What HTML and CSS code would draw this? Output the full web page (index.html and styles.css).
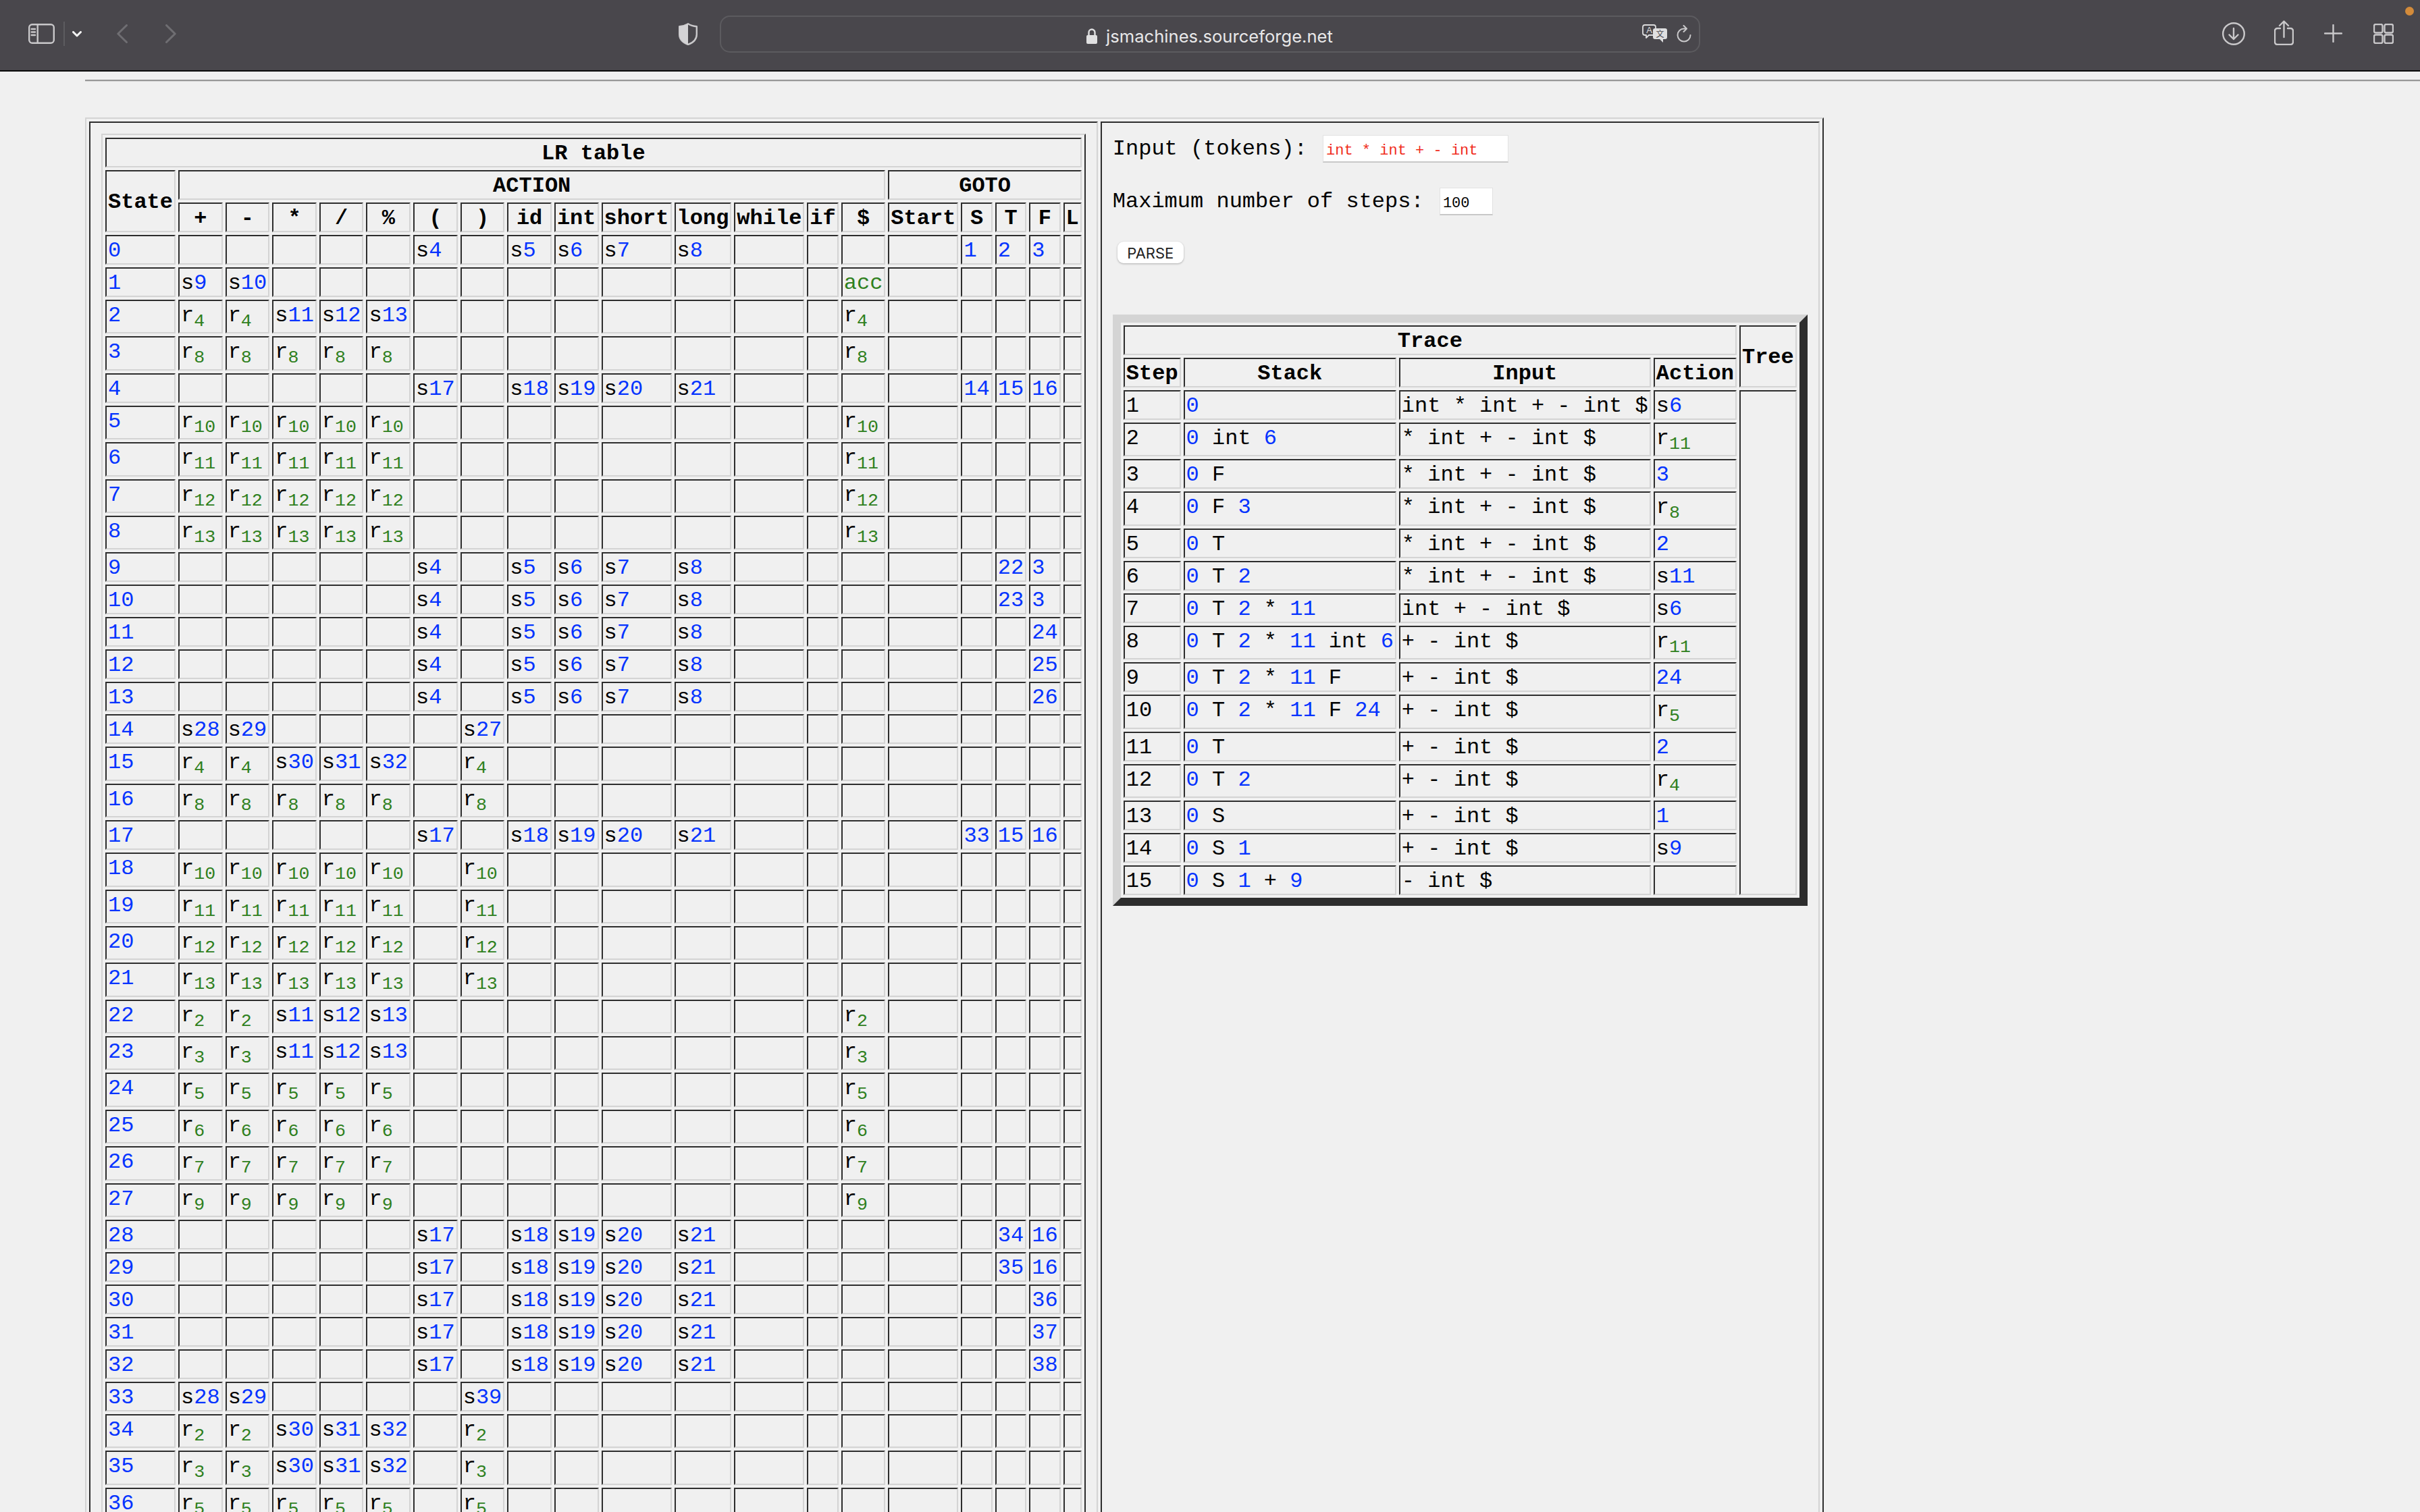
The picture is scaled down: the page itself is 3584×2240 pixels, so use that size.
FILE: index.html
```html
<!DOCTYPE html>
<html lang="en">
<head>
<meta charset="utf-8">
<title>jsmachines.sourceforge.net</title>
<link rel="stylesheet" href="styles.css">
</head>
<body>
<header class="toolbar">
<svg class="ic m-sidebar" width="39" height="30" viewBox="0 0 39 30"><rect x="1.2" y="1.2" width="36.6" height="27.6" rx="4.5"/><path d="M13.7 1.2V28.8M4.7 8H10M4.7 12.5H10M4.7 17H10"/></svg>
<span class="tb-divider"></span>
<svg class="ic-white m-chevron" width="14" height="9" viewBox="0 0 14 9"><path d="M1.5 1.5L7 7L12.5 1.5"/></svg>
<svg class="ic-dim m-back" width="16" height="28" viewBox="0 0 16 28"><path d="M14.5 1.5L1.8 14L14.5 26.5"/></svg>
<svg class="ic-dim m-fwd" width="16" height="28" viewBox="0 0 16 28"><path d="M1.5 1.5L14.2 14L1.5 26.5"/></svg>
<svg class="ic m-shield" width="28" height="33" viewBox="0 0 28 33"><path d="M14 1.2C10.500 3.500 5.500 4.800 1.200 5.200V17C1.200 25 8 29.800 14 32C20 29.800 26.800 25 26.800 17V5.200C22.500 4.800 17.500 3.500 14 1.200Z"/><path class="fill" d="M14 1.200C10.500 3.500 5.500 4.800 1.200 5.200V17C1.200 25 8 29.800 14 32Z"/></svg>
<div class="urlbar m-url">
  <span class="url-side"></span>
  <span class="url-center">
    <svg class="lock" width="16" height="23" viewBox="0 0 16 23"><path class="shackle" d="M3.500 11V6a4.500 4.500 0 0 1 9 0V11"/><rect class="body" x="0" y="10" width="16" height="13" rx="2"/></svg>
    <span class="url-text">jsmachines.sourceforge.net</span>
  </span>
  <span class="url-side url-right">
    <svg class="translate" width="38" height="28" viewBox="0 0 38 28"><path class="bubble" d="M4 1H17Q20 1 20 4V13Q20 16 17 16H10L6 20V16H4Q1 16 1 13V4Q1 1 4 1Z"/><text class="ta" x="10.500" y="13">A</text><path class="bubble2" d="M19 6H34Q37 6 37 9V19Q37 22 34 22H31V27L26 22H19Q16 22 16 19V9Q16 6 19 6Z"/><text class="tz" x="26.500" y="19">文</text></svg>
    <svg class="ic reload" width="22" height="26" viewBox="0 0 22 26"><path d="M14.500 5.500H11A9.500 9.500 0 1 0 20.500 15M10.500 1L15 5.500L10.500 10"/></svg>
  </span>
</div>
<svg class="ic m-down" width="34" height="34" viewBox="0 0 34 34"><circle cx="17" cy="17" r="15.800"/><path d="M17 9V25M10.500 18.500L17 25L23.500 18.500"/></svg>
<svg class="ic m-share" width="29" height="37" viewBox="0 0 29 37"><path d="M9 12H5Q1 12 1 16V32Q1 36 5 36H24Q28 36 28 32V16Q28 12 24 12H20M14.500 2V25M8 8L14.500 1.500L21 8"/></svg>
<svg class="ic m-plus" width="27" height="27" viewBox="0 0 27 27"><path d="M13.500 1V26M1 13.500H26"/></svg>
<svg class="ic m-tabs" width="30" height="30" viewBox="0 0 30 30"><rect x="1" y="1" width="12.500" height="12.500" rx="2.500"/><rect x="16.500" y="1" width="12.500" height="12.500" rx="2.500"/><rect x="1" y="16.500" width="12.500" height="12.500" rx="2.500"/><rect x="16.500" y="16.500" width="12.500" height="12.500" rx="2.500"/></svg>
<span class="rec-dot"></span>
</header>
<main class="page">
<hr class="rule">
<table class="layout">
<tr>
<td class="pane">
<table class="grid">
<tr><th colspan="20">LR table</th></tr>
<tr><th rowspan="2">State</th><th colspan="14">ACTION</th><th colspan="5">GOTO</th></tr>
<tr><th>+</th><th>-</th><th>*</th><th>/</th><th>%</th><th>(</th><th>)</th><th>id</th><th>int</th><th>short</th><th>long</th><th>while</th><th>if</th><th>$</th><th>Start</th><th>S</th><th>T</th><th>F</th><th>L</th></tr>
<tr><td><a>0</a><td><td><td><td><td><td>s<a>4</a><td><td>s<a>5</a><td>s<a>6</a><td>s<a>7</a><td>s<a>8</a><td><td><td><td><td><a>1</a><td><a>2</a><td><a>3</a><td></tr>
<tr><td><a>1</a><td>s<a>9</a><td>s<a>10</a><td><td><td><td><td><td><td><td><td><td><td><td><em>acc</em><td><td><td><td><td></tr>
<tr><td><a>2</a><td>r<sub>4</sub><td>r<sub>4</sub><td>s<a>11</a><td>s<a>12</a><td>s<a>13</a><td><td><td><td><td><td><td><td><td>r<sub>4</sub><td><td><td><td><td></tr>
<tr><td><a>3</a><td>r<sub>8</sub><td>r<sub>8</sub><td>r<sub>8</sub><td>r<sub>8</sub><td>r<sub>8</sub><td><td><td><td><td><td><td><td><td>r<sub>8</sub><td><td><td><td><td></tr>
<tr><td><a>4</a><td><td><td><td><td><td>s<a>17</a><td><td>s<a>18</a><td>s<a>19</a><td>s<a>20</a><td>s<a>21</a><td><td><td><td><td><a>14</a><td><a>15</a><td><a>16</a><td></tr>
<tr><td><a>5</a><td>r<sub>10</sub><td>r<sub>10</sub><td>r<sub>10</sub><td>r<sub>10</sub><td>r<sub>10</sub><td><td><td><td><td><td><td><td><td>r<sub>10</sub><td><td><td><td><td></tr>
<tr><td><a>6</a><td>r<sub>11</sub><td>r<sub>11</sub><td>r<sub>11</sub><td>r<sub>11</sub><td>r<sub>11</sub><td><td><td><td><td><td><td><td><td>r<sub>11</sub><td><td><td><td><td></tr>
<tr><td><a>7</a><td>r<sub>12</sub><td>r<sub>12</sub><td>r<sub>12</sub><td>r<sub>12</sub><td>r<sub>12</sub><td><td><td><td><td><td><td><td><td>r<sub>12</sub><td><td><td><td><td></tr>
<tr><td><a>8</a><td>r<sub>13</sub><td>r<sub>13</sub><td>r<sub>13</sub><td>r<sub>13</sub><td>r<sub>13</sub><td><td><td><td><td><td><td><td><td>r<sub>13</sub><td><td><td><td><td></tr>
<tr><td><a>9</a><td><td><td><td><td><td>s<a>4</a><td><td>s<a>5</a><td>s<a>6</a><td>s<a>7</a><td>s<a>8</a><td><td><td><td><td><td><a>22</a><td><a>3</a><td></tr>
<tr><td><a>10</a><td><td><td><td><td><td>s<a>4</a><td><td>s<a>5</a><td>s<a>6</a><td>s<a>7</a><td>s<a>8</a><td><td><td><td><td><td><a>23</a><td><a>3</a><td></tr>
<tr><td><a>11</a><td><td><td><td><td><td>s<a>4</a><td><td>s<a>5</a><td>s<a>6</a><td>s<a>7</a><td>s<a>8</a><td><td><td><td><td><td><td><a>24</a><td></tr>
<tr><td><a>12</a><td><td><td><td><td><td>s<a>4</a><td><td>s<a>5</a><td>s<a>6</a><td>s<a>7</a><td>s<a>8</a><td><td><td><td><td><td><td><a>25</a><td></tr>
<tr><td><a>13</a><td><td><td><td><td><td>s<a>4</a><td><td>s<a>5</a><td>s<a>6</a><td>s<a>7</a><td>s<a>8</a><td><td><td><td><td><td><td><a>26</a><td></tr>
<tr><td><a>14</a><td>s<a>28</a><td>s<a>29</a><td><td><td><td><td>s<a>27</a><td><td><td><td><td><td><td><td><td><td><td><td></tr>
<tr><td><a>15</a><td>r<sub>4</sub><td>r<sub>4</sub><td>s<a>30</a><td>s<a>31</a><td>s<a>32</a><td><td>r<sub>4</sub><td><td><td><td><td><td><td><td><td><td><td><td></tr>
<tr><td><a>16</a><td>r<sub>8</sub><td>r<sub>8</sub><td>r<sub>8</sub><td>r<sub>8</sub><td>r<sub>8</sub><td><td>r<sub>8</sub><td><td><td><td><td><td><td><td><td><td><td><td></tr>
<tr><td><a>17</a><td><td><td><td><td><td>s<a>17</a><td><td>s<a>18</a><td>s<a>19</a><td>s<a>20</a><td>s<a>21</a><td><td><td><td><td><a>33</a><td><a>15</a><td><a>16</a><td></tr>
<tr><td><a>18</a><td>r<sub>10</sub><td>r<sub>10</sub><td>r<sub>10</sub><td>r<sub>10</sub><td>r<sub>10</sub><td><td>r<sub>10</sub><td><td><td><td><td><td><td><td><td><td><td><td></tr>
<tr><td><a>19</a><td>r<sub>11</sub><td>r<sub>11</sub><td>r<sub>11</sub><td>r<sub>11</sub><td>r<sub>11</sub><td><td>r<sub>11</sub><td><td><td><td><td><td><td><td><td><td><td><td></tr>
<tr><td><a>20</a><td>r<sub>12</sub><td>r<sub>12</sub><td>r<sub>12</sub><td>r<sub>12</sub><td>r<sub>12</sub><td><td>r<sub>12</sub><td><td><td><td><td><td><td><td><td><td><td><td></tr>
<tr><td><a>21</a><td>r<sub>13</sub><td>r<sub>13</sub><td>r<sub>13</sub><td>r<sub>13</sub><td>r<sub>13</sub><td><td>r<sub>13</sub><td><td><td><td><td><td><td><td><td><td><td><td></tr>
<tr><td><a>22</a><td>r<sub>2</sub><td>r<sub>2</sub><td>s<a>11</a><td>s<a>12</a><td>s<a>13</a><td><td><td><td><td><td><td><td><td>r<sub>2</sub><td><td><td><td><td></tr>
<tr><td><a>23</a><td>r<sub>3</sub><td>r<sub>3</sub><td>s<a>11</a><td>s<a>12</a><td>s<a>13</a><td><td><td><td><td><td><td><td><td>r<sub>3</sub><td><td><td><td><td></tr>
<tr><td><a>24</a><td>r<sub>5</sub><td>r<sub>5</sub><td>r<sub>5</sub><td>r<sub>5</sub><td>r<sub>5</sub><td><td><td><td><td><td><td><td><td>r<sub>5</sub><td><td><td><td><td></tr>
<tr><td><a>25</a><td>r<sub>6</sub><td>r<sub>6</sub><td>r<sub>6</sub><td>r<sub>6</sub><td>r<sub>6</sub><td><td><td><td><td><td><td><td><td>r<sub>6</sub><td><td><td><td><td></tr>
<tr><td><a>26</a><td>r<sub>7</sub><td>r<sub>7</sub><td>r<sub>7</sub><td>r<sub>7</sub><td>r<sub>7</sub><td><td><td><td><td><td><td><td><td>r<sub>7</sub><td><td><td><td><td></tr>
<tr><td><a>27</a><td>r<sub>9</sub><td>r<sub>9</sub><td>r<sub>9</sub><td>r<sub>9</sub><td>r<sub>9</sub><td><td><td><td><td><td><td><td><td>r<sub>9</sub><td><td><td><td><td></tr>
<tr><td><a>28</a><td><td><td><td><td><td>s<a>17</a><td><td>s<a>18</a><td>s<a>19</a><td>s<a>20</a><td>s<a>21</a><td><td><td><td><td><td><a>34</a><td><a>16</a><td></tr>
<tr><td><a>29</a><td><td><td><td><td><td>s<a>17</a><td><td>s<a>18</a><td>s<a>19</a><td>s<a>20</a><td>s<a>21</a><td><td><td><td><td><td><a>35</a><td><a>16</a><td></tr>
<tr><td><a>30</a><td><td><td><td><td><td>s<a>17</a><td><td>s<a>18</a><td>s<a>19</a><td>s<a>20</a><td>s<a>21</a><td><td><td><td><td><td><td><a>36</a><td></tr>
<tr><td><a>31</a><td><td><td><td><td><td>s<a>17</a><td><td>s<a>18</a><td>s<a>19</a><td>s<a>20</a><td>s<a>21</a><td><td><td><td><td><td><td><a>37</a><td></tr>
<tr><td><a>32</a><td><td><td><td><td><td>s<a>17</a><td><td>s<a>18</a><td>s<a>19</a><td>s<a>20</a><td>s<a>21</a><td><td><td><td><td><td><td><a>38</a><td></tr>
<tr><td><a>33</a><td>s<a>28</a><td>s<a>29</a><td><td><td><td><td>s<a>39</a><td><td><td><td><td><td><td><td><td><td><td><td></tr>
<tr><td><a>34</a><td>r<sub>2</sub><td>r<sub>2</sub><td>s<a>30</a><td>s<a>31</a><td>s<a>32</a><td><td>r<sub>2</sub><td><td><td><td><td><td><td><td><td><td><td><td></tr>
<tr><td><a>35</a><td>r<sub>3</sub><td>r<sub>3</sub><td>s<a>30</a><td>s<a>31</a><td>s<a>32</a><td><td>r<sub>3</sub><td><td><td><td><td><td><td><td><td><td><td><td></tr>
<tr><td><a>36</a><td>r<sub>5</sub><td>r<sub>5</sub><td>r<sub>5</sub><td>r<sub>5</sub><td>r<sub>5</sub><td><td>r<sub>5</sub><td><td><td><td><td><td><td><td><td><td><td><td></tr>
</table>
</td>
<td class="pane">
<p class="field">Input (tokens): <input class="tokens" type="text" value="int * int + - int"></p>
<p class="field">Maximum number of steps: <input class="steps" type="text" value="100"></p>
<p class="actions"><button class="parse" type="button">PARSE</button></p>
<table class="grid trace">
<tr><th colspan="4">Trace</th><th rowspan="2" class="tree-head">Tree</th></tr>
<tr><th>Step</th><th>Stack</th><th>Input</th><th>Action</th></tr>
<tr><td>1<td><a>0</a><td>int * int + - int $<td>s<a>6</a><td rowspan="15"></tr>
<tr><td>2<td><a>0</a> int <a>6</a><td>* int + - int $<td>r<sub>11</sub></tr>
<tr><td>3<td><a>0</a> F<td>* int + - int $<td><a>3</a></tr>
<tr><td>4<td><a>0</a> F <a>3</a><td>* int + - int $<td>r<sub>8</sub></tr>
<tr><td>5<td><a>0</a> T<td>* int + - int $<td><a>2</a></tr>
<tr><td>6<td><a>0</a> T <a>2</a><td>* int + - int $<td>s<a>11</a></tr>
<tr><td>7<td><a>0</a> T <a>2</a> * <a>11</a><td>int + - int $<td>s<a>6</a></tr>
<tr><td>8<td><a>0</a> T <a>2</a> * <a>11</a> int <a>6</a><td>+ - int $<td>r<sub>11</sub></tr>
<tr><td>9<td><a>0</a> T <a>2</a> * <a>11</a> F<td>+ - int $<td><a>24</a></tr>
<tr><td>10<td><a>0</a> T <a>2</a> * <a>11</a> F <a>24</a><td>+ - int $<td>r<sub>5</sub></tr>
<tr><td>11<td><a>0</a> T<td>+ - int $<td><a>2</a></tr>
<tr><td>12<td><a>0</a> T <a>2</a><td>+ - int $<td>r<sub>4</sub></tr>
<tr><td>13<td><a>0</a> S<td>+ - int $<td><a>1</a></tr>
<tr><td>14<td><a>0</a> S <a>1</a><td>+ - int $<td>s<a>9</a></tr>
<tr><td>15<td><a>0</a> S <a>1</a> + <a>9</a><td>- int $<td></tr>
</table>
</td>
</tr>
</table>
</main>
</body>
</html>
```
FILE: styles.css
```css
html, body {
  margin: 0;
  height: 100%;
  overflow: hidden;
  background: #f0f0f0;
}
body {
  font-family: "Liberation Mono", monospace;
  font-size: 32px;
  color: #000;
}

/* Browser toolbar */
.toolbar {
  position: relative;
  display: flex;
  align-items: center;
  box-sizing: border-box;
  height: 106px;
  padding: 0 0 4px 42px;
  background: #49474c;
  border-bottom: 2px solid #0b0b0b;
}
.toolbar svg { flex: none; display: block; }
.ic, .ic-white, .ic-dim { fill: none; stroke-linecap: round; stroke-linejoin: round; }
.ic { stroke: #c9c8ca; stroke-width: 2.4; }
.ic .fill { fill: #d4d3d5; stroke: none; }
.ic-white { stroke: #f4f4f4; stroke-width: 3; }
.ic-dim { stroke: #6f6e72; stroke-width: 3; }
.tb-divider { flex: none; width: 2px; height: 36px; margin-left: 13px; background: #5d5c60; }
.m-chevron { margin-left: 11px; }
.m-back { margin-left: 52px; }
.m-fwd { margin-left: 56px; }
.m-shield { margin-left: 744px; }
.m-url { margin-left: 33px; }
.m-down { margin-left: 773px; }
.m-share { margin-left: 43px; margin-bottom: 3px; }
.m-plus { margin-left: 45px; margin-bottom: 1px; }
.m-tabs { margin-left: 46px; }

.urlbar {
  flex: none;
  display: flex;
  align-items: center;
  box-sizing: border-box;
  width: 1452px;
  height: 55px;
  padding-right: 11px;
  border: 2px solid #5c5b5f;
  border-radius: 15px;
}
.url-side { flex: 1 1 0; display: flex; align-items: center; }
.url-right { justify-content: flex-end; }
.url-center { display: flex; align-items: center; gap: 13px; margin: 6px 0 0 10px; }
.url-text {
  font-family: Inter, "Liberation Sans", sans-serif;
  font-size: 25.6px;
  color: #e8e8e9;
  white-space: nowrap;
}
.lock .shackle { fill: none; stroke: #e0e0e1; stroke-width: 2.4; }
.lock .body { fill: #e0e0e1; }
.translate .bubble { fill: none; stroke: #dcdcdd; stroke-width: 1.8; stroke-linejoin: round; }
.translate .bubble2 { fill: #e0e0e1; }
.translate .ta { font: 13px "Liberation Sans", sans-serif; fill: #dcdcdd; text-anchor: middle; }
.translate .tz { font: 12px "Noto Sans CJK SC", sans-serif; fill: #49474c; text-anchor: middle; }
.reload { margin-left: 13px; stroke-width: 2; }
.rec-dot {
  position: absolute;
  top: 10px;
  right: 9px;
  width: 13px;
  height: 13px;
  border-radius: 50%;
  background: #d38b3a;
}

/* Page */
.page { padding-left: 126px; }
.rule {
  height: 0;
  margin: 12px 0 53px;
  border: 0;
  border-top: 2px solid #979797;
  border-bottom: 1px solid #d8d8d8;
}
.layout, .grid {
  border-style: solid;
  border-color: #d4d4d4 #2d2d2d #2d2d2d #d4d4d4;
  border-width: 2px;
  border-collapse: separate;
  border-spacing: 4px;
}
.pane {
  padding: 16px;
  vertical-align: top;
  border: 2px solid;
  border-color: #2d2d2d #d4d4d4 #d4d4d4 #2d2d2d;
}
.grid th, .grid td {
  padding: 4px 2px 0;
  border: 2px solid;
  border-color: #2d2d2d #d4d4d4 #d4d4d4 #2d2d2d;
  white-space: nowrap;
  font-size: 32px;
  line-height: 36px;
}
.grid th { font-weight: bold; text-align: center; vertical-align: middle; }
.grid td { text-align: left; vertical-align: top; }
.grid tr:has(sub) td { height: 42.4px; }
.grid a { color: #0433ff; }
.grid sub { color: #2f8020; line-height: 30px; }
.grid em { color: #2f8020; font-style: normal; }

.trace { border-width: 12px; }

/* Form */
.field { margin: 0 0 33px; white-space: nowrap; }
.tokens, .steps {
  box-sizing: border-box;
  height: 41px;
  margin: 2px 0 2px 4px;
  padding: 7px 0 0 4px;
  font-family: "Liberation Mono", monospace;
  font-size: 22px;
  background: #fff;
  border: 1px solid #e2e2e2;
  border-bottom: 2px solid #c8c8c8;
  border-radius: 0;
  outline: none;
}
.tokens { width: 275px; color: #f02c1c; }
.steps { width: 79px; color: #000; }
.actions { margin: 37px 0 76px 7px; }
.parse {
  display: block;
  box-sizing: border-box;
  width: 98px;
  height: 32px;
  padding: 3px 0 0;
  font-family: Inter, "Liberation Sans", sans-serif;
  font-size: 22px;
  line-height: 29px;
  color: #222;
  background: #fff;
  border: 0;
  border-radius: 9px;
  box-shadow: 0 1px 3px rgba(0, 0, 0, .28);
}
```
